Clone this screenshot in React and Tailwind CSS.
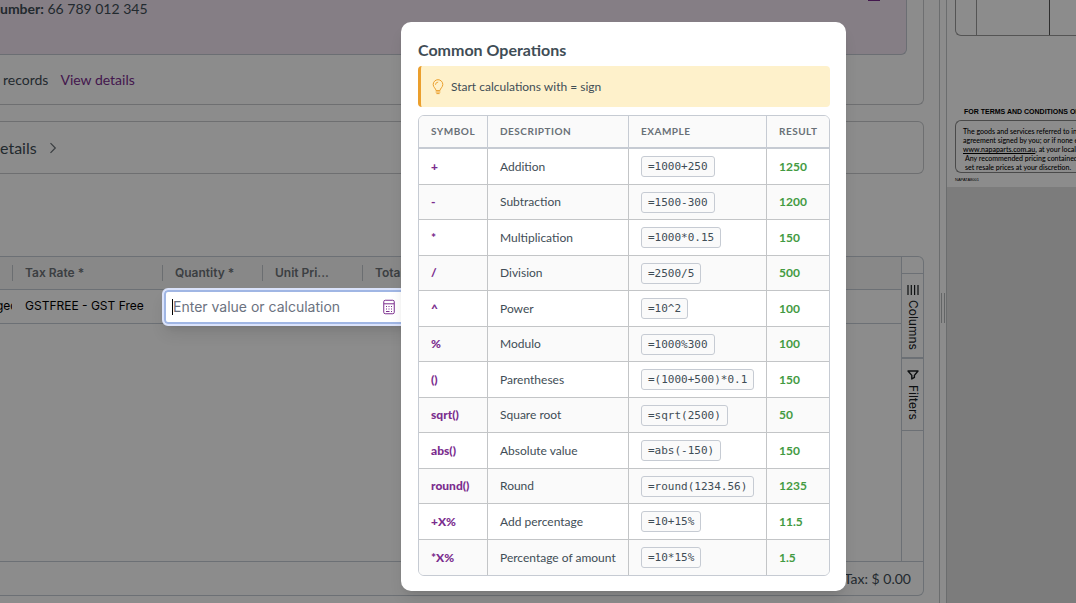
import React from "react";

const operations = [
  ["+", "Addition", "=1000+250", "1250"],
  ["-", "Subtraction", "=1500-300", "1200"],
  ["*", "Multiplication", "=1000*0.15", "150"],
  ["/", "Division", "=2500/5", "500"],
  ["^", "Power", "=10^2", "100"],
  ["%", "Modulo", "=1000%300", "100"],
  ["()", "Parentheses", "=(1000+500)*0.1", "150"],
  ["sqrt()", "Square root", "=sqrt(2500)", "50"],
  ["abs()", "Absolute value", "=abs(-150)", "150"],
  ["round()", "Round", "=round(1234.56)", "1235"],
  ["+X%", "Add percentage", "=10+15%", "11.5"],
  ["*X%", "Percentage of amount", "=10*15%", "1.5"],
];

function CalculatorIcon() {
  return (
    <svg width="12" height="16" viewBox="0 0 12 16" fill="none" stroke="#7b2d8e" aria-hidden="true">
      <rect x="0.75" y="1.25" width="10.5" height="13.5" rx="1.5" />
      <path d="M1 4.8h10" />
      <path d="M3 7.5h1M5.5 7.5h1M8 7.5h1M3 10h1M5.5 10h1M8 10h1M3 12.5h3.5M8 12.5h1" strokeWidth="1.1" />
    </svg>
  );
}

function BulbIcon() {
  return (
    <svg width="12" height="16" viewBox="0 0 12 16" fill="none" stroke="#eb9f2d" strokeLinecap="round" aria-hidden="true">
      <path d="M4 11.2C3.9 9.4 1.2 8.3 1.2 5.5a4.8 4.8 0 0 1 9.6 0c0 2.8-2.7 3.9-2.8 5.7z" strokeLinejoin="round" />
      <path d="M3.5 5.4A2.4 2.4 0 0 1 5.8 3.1" strokeWidth="0.9" />
      <path d="M4 13h4M4.8 14.6h2.4" />
    </svg>
  );
}

function ColumnsIcon() {
  return (
    <svg width="12" height="10" viewBox="0 0 12 10" stroke="#181d1f" strokeWidth="1.2" aria-hidden="true">
      <path d="M1 0v10M4.3 0v10M7.6 0v10M11 0v10" />
    </svg>
  );
}

function FilterIcon() {
  return (
    <svg width="12" height="10" viewBox="0 0 12 10" fill="none" stroke="#181d1f" strokeWidth="1.4" strokeLinejoin="round" aria-hidden="true">
      <path d="M1 1h10L7.4 5.4v2L4.8 9V5.4z" />
    </svg>
  );
}

function Field() {
  return (
    <div className="absolute -top-[2px] left-0 z-20 flex h-[38px] w-64 items-center rounded-md border-2 border-[#dbe3fb] bg-white pl-2 ring-2 ring-[#a0b6e4] ring-inset shadow-lg">
      <span className="h-4 w-px bg-black" />
      <input
        aria-label="Quantity"
        placeholder="Enter value or calculation"
        className="w-[210px] bg-transparent font-['Inter',sans-serif] text-[14px] text-gray-800 outline-none placeholder:text-[#6b7280]"
      />
      <button type="button" aria-label="Open calculator">
        <CalculatorIcon />
      </button>
    </div>
  );
}

const headCell = "relative truncate pl-[13px] text-left font-semibold before:absolute before:left-0 before:top-2 before:h-4 before:w-px before:bg-[#c3c8ce]";

function LineItems() {
  return (
    <section className="mt-[82px] mr-[15px] flex flex-col rounded-r-md border border-l-0 border-[#c5cdd5]">
      <div className="flex h-[304px]">
        <div className="min-w-0 flex-1">
          <table className="w-full table-fixed border-collapse font-['Inter',sans-serif] text-[12px]">
            <colgroup>
              <col className="w-3" />
              <col className="w-[150px]" />
              <col className="w-[100px]" />
              <col className="w-[100px]" />
              <col />
            </colgroup>
            <thead>
              <tr className="h-8 border-b border-[#c5cdd5] bg-[#f8f8f8] text-[#6e7379]">
                <td />
                <th className={headCell}>Tax Rate *</th>
                <th className={headCell}>Quantity *</th>
                <th className={headCell}>Unit Pri...</th>
                <th className={headCell}>Total</th>
              </tr>
            </thead>
            <tbody>
              <tr className="h-[34px] border-b border-[#c5cdd5] text-black">
                <td className="p-0">
                  <div className="-ml-1 overflow-hidden">ged</div>
                </td>
                <td className="pl-[13px] whitespace-nowrap">GSTFREE - GST Free</td>
                <td className="relative p-0">
                  <Field />
                </td>
                <td />
                <td />
              </tr>
            </tbody>
          </table>
        </div>
        <div className="flex w-[22px] flex-col border-l border-[#c5cdd5] pt-4 font-['Inter',sans-serif] text-[12px] text-[#181d1f]">
          <button type="button" className="flex h-[86px] flex-col items-center gap-[5px] border-t border-b-2 border-[#c5cdd5] pt-[11px]">
            <ColumnsIcon />
            <span className="[writing-mode:vertical-rl]">Columns</span>
          </button>
          <button type="button" className="flex h-[72px] flex-col items-center gap-[5px] border-b border-[#c5cdd5] pt-[11px]">
            <FilterIcon />
            <span className="[writing-mode:vertical-rl]">Filters</span>
          </button>
        </div>
      </div>
      <footer className="flex h-[34px] items-center justify-end border-t border-[#c5cdd5] pr-3 text-[14px]">Tax: $ 0.00</footer>
    </section>
  );
}

function SourceDocument() {
  return (
    <aside className="w-[130px] overflow-hidden border-l border-[#c3c6c9] bg-[#e2e2e2]">
      <div className="h-[187px] overflow-hidden bg-white pl-2 whitespace-nowrap text-black">
        <div className="flex h-9 rounded-bl-md border-b border-l border-[#999]">
          <div className="w-[21px] border-r border-[#999]" />
          <div className="w-[73px] border-r border-[#555]" />
        </div>
        <h2 className="mt-[71px] pl-[9px] font-['Liberation_Sans',sans-serif] text-[7px] leading-[10px] font-bold">FOR TERMS AND CONDITIONS OF S</h2>
        <div className="mt-[3px] h-[53px] rounded-l-md border border-r-0 border-[#888] pt-[6px] pl-[7px] text-[7px] leading-[9px] font-medium">
          <p>The goods and services referred to in th</p>
          <p>agreement signed by you; or if none ex</p>
          <p><a href="#terms" className="underline">www.napaparts.com.au</a>, at your local N</p>
          <p className="pl-[2px]">Any recommended pricing contained i</p>
          <p className="pl-[2px]">set resale prices at your discretion.</p>
        </div>
        <p className="pt-[4px] font-['Liberation_Sans',sans-serif] text-[4px] leading-[6px]">NAPATA8001</p>
      </div>
    </aside>
  );
}

function OperationsPanel() {
  return (
    <div role="dialog" aria-labelledby="operations-title" className="absolute top-[22px] left-[401px] z-30 w-[445px] rounded-[10px] bg-white pt-[18px] pr-4 pb-[15px] pl-[17px] text-[#3f4d56] shadow-lg">
      <h1 id="operations-title" className="text-[16px] leading-5 font-bold">Common Operations</h1>
      <div className="mt-[6px] flex h-[41px] items-center gap-[7px] rounded border-l-3 border-[#eb9f2d] bg-[#fef1cb] pl-[11px] text-[12px]">
        <BulbIcon />
        <span>Start calculations with = sign</span>
      </div>
      <div className="mt-2 overflow-hidden rounded-md border border-[#c6cbd3]">
        <table className="w-full table-fixed border-separate border-spacing-0 text-left text-[12px]">
          <colgroup>
            <col className="w-[69px]" />
            <col className="w-[141px]" />
            <col className="w-[138px]" />
            <col />
          </colgroup>
          <thead>
            <tr className="h-[33px] bg-[#fafafa] text-[10px] tracking-wider text-[#697077] [&>th]:border-b-2 [&>th]:border-[#c6cbd3] [&>th]:pl-3 [&>th:not(:last-child)]:border-r">
              <th>SYMBOL</th>
              <th>DESCRIPTION</th>
              <th>EXAMPLE</th>
              <th>RESULT</th>
            </tr>
          </thead>
          <tbody>
            {operations.map(([symbol, description, example, result]) => (
              <tr
                key={symbol}
                className="odd:h-9 even:h-[35px] even:bg-[#fafafa] last:h-[34px] [&>td]:border-[#c3c5c7] [&>td]:py-0 [&>td]:pl-3 [&>td:not(:last-child)]:border-r [&:not(:last-child)>td]:border-b"
              >
                <td className="font-black text-[#7b2d8e]">{symbol}</td>
                <td>{description}</td>
                <td>
                  <code className="inline-block h-[21px] rounded-[3px] border border-[#c6cbd3] bg-[#fafafa] px-[6px] align-middle font-['DejaVu_Sans_Mono',monospace] text-[11px] leading-[19px]">
                    {example}
                  </code>
                </td>
                <td className="font-bold text-[#439a42]">{result}</td>
              </tr>
            ))}
          </tbody>
        </table>
      </div>
    </div>
  );
}

export default function App() {
  return (
    <div className="relative flex h-screen overflow-hidden bg-white font-['Lato',sans-serif] text-[#3f4d56]">
      <main className="min-w-0 flex-1">
        <section className="mr-[15px] h-[105px] rounded-br-md border-r border-b border-[#c8cbce] pr-4">
          <div className="relative h-[55px] rounded-br-md border-r border-b border-[#c3c9d2] bg-[#f2e6f2] text-[14px] leading-[18px]">
            <b>umber:</b> 66 789 012 345
            <span className="absolute right-[26px] top-0 h-px w-3 bg-[#7b2d8e]" />
          </div>
          <p className="flex h-[49px] items-center gap-3 pl-[3px] text-[14px]">
            <span>records</span>
            <a href="#details" className="text-[#7b2d8e]">View details</a>
          </p>
        </section>
        <section className="mt-4 mr-[15px] h-[53px] rounded-r-md border border-l-0 border-[#c8cbce]">
          <button type="button" className="flex h-full items-center gap-3 text-[16px]">
            <span>etails</span>
            <svg width="8" height="12" viewBox="0 0 8 12" fill="none" stroke="#697077" strokeWidth="1.2" aria-hidden="true">
              <path d="M1.5 1.2 6.3 6l-4.8 4.8" />
            </svg>
          </button>
        </section>
        <LineItems />
      </main>
      <div className="flex w-[7px] items-center justify-center border-l border-[#c3c6c9] pt-3">
        <div className="h-[30px] w-1 border-x border-[#b5b8bb]" />
      </div>
      <SourceDocument />
      <div className="absolute inset-0 z-10 bg-black/45" />
      <OperationsPanel />
    </div>
  );
}
